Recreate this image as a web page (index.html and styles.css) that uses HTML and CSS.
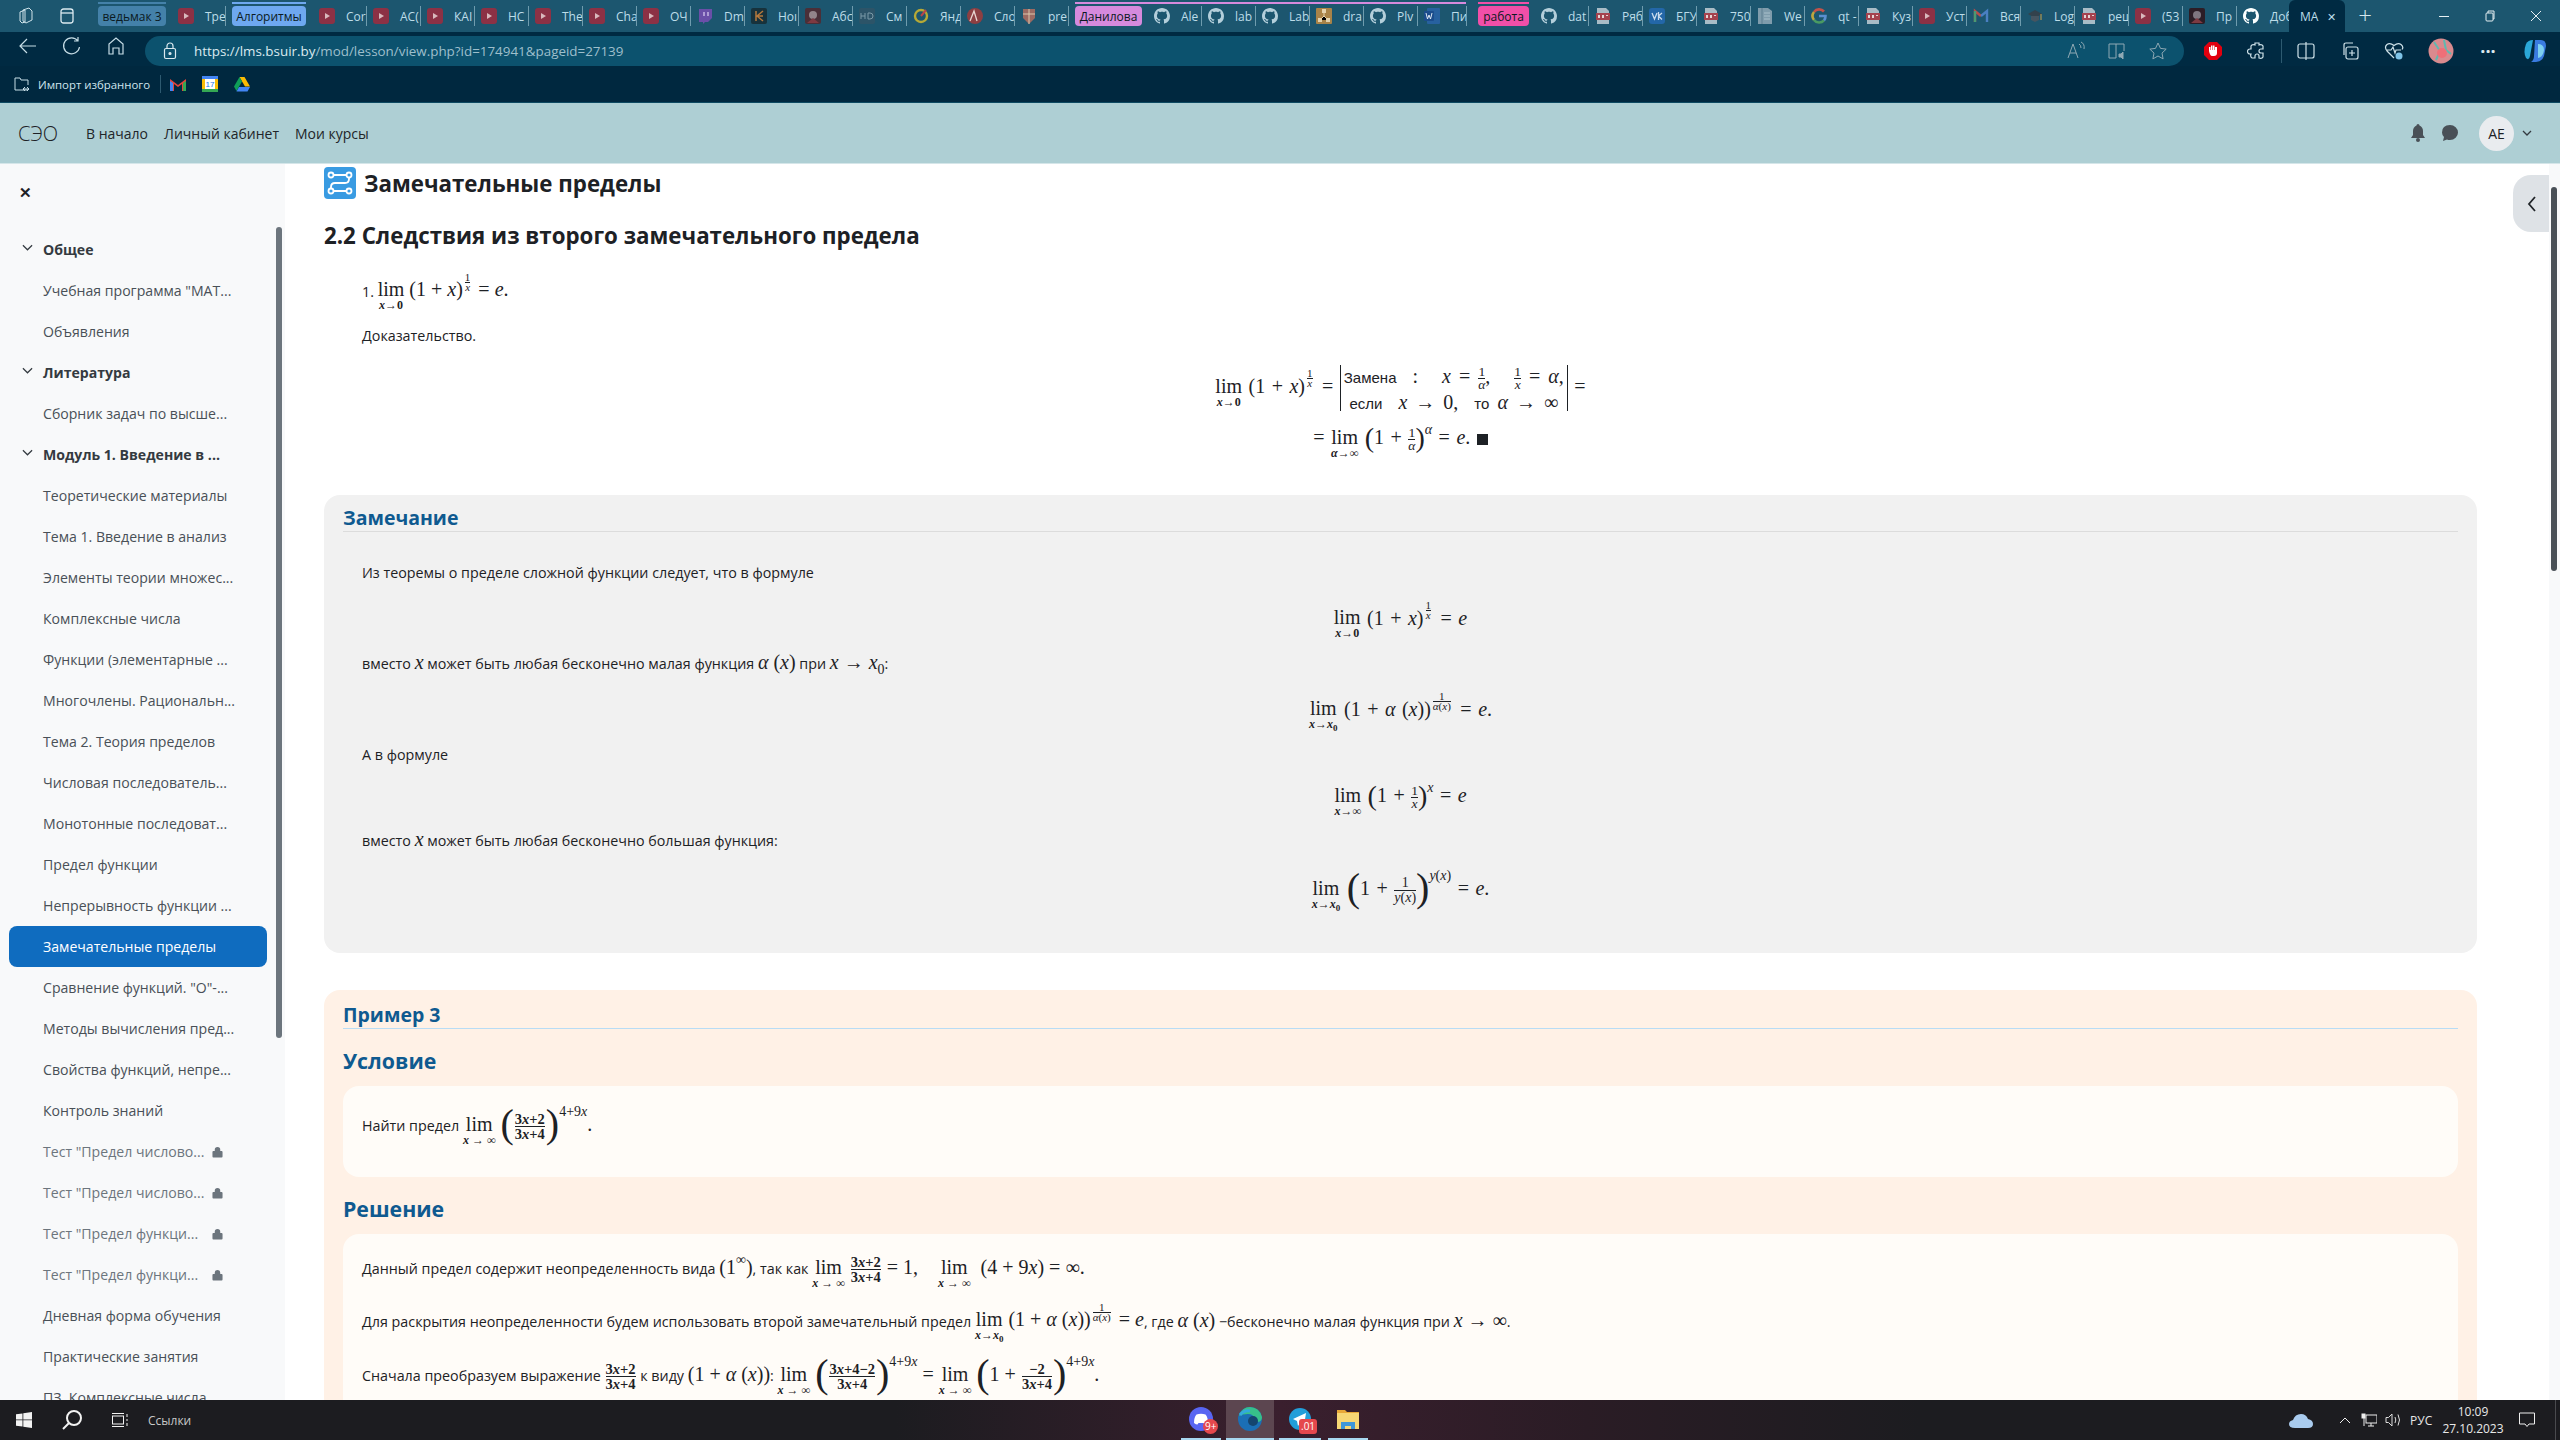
FILE: index.html
```html
<!DOCTYPE html>
<html lang="ru">
<head>
    <meta charset="UTF-8">
    <meta name="viewport" content="width=device-width, initial-scale=1.0">
    <title>Замечательные пределы</title>
    <link rel="stylesheet" href="styles.css">
</head>
<body>

    <!-- shared favicons -->
    <svg class="defs" width="0" height="0">
        <symbol id="yt" viewBox="0 0 16 16"><rect width="16" height="16" rx="3" fill="#8c3145"/><path d="M6 5l5 3-5 3z" fill="#d9b9bd"/></symbol>
        <symbol id="gh" viewBox="0 0 16 16"><path fill="#b4cfdb" d="M8 0C3.58 0 0 3.58 0 8c0 3.54 2.29 6.53 5.47 7.59.4.07.55-.17.55-.38 0-.19-.01-.82-.01-1.49-2.01.37-2.53-.49-2.69-.94-.09-.23-.48-.94-.82-1.13-.28-.15-.68-.52-.01-.53.63-.01 1.08.58 1.23.82.72 1.21 1.87.87 2.33.66.07-.52.28-.87.51-1.07-1.78-.2-3.64-.89-3.64-3.95 0-.87.31-1.59.82-2.15-.08-.2-.36-1.02.08-2.12 0 0 .67-.21 2.2.82.64-.18 1.32-.27 2-.27s1.36.09 2 .27c1.53-1.04 2.2-.82 2.2-.82.44 1.1.16 1.92.08 2.12.51.56.82 1.27.82 2.15 0 3.07-1.87 3.75-3.65 3.95.29.25.54.73.54 1.48 0 1.07-.01 1.93-.01 2.2 0 .21.15.46.55.38A8.013 8.013 0 0016 8c0-4.42-3.58-8-8-8z"/></symbol>
        <symbol id="pdf" viewBox="0 0 16 16"><path d="M2 0h9l3 3v13H2z" fill="#a9bcc6"/><rect x="1" y="5" width="14" height="7" fill="#a5434f"/><path d="M3 7h2v3H3zM7 7h2v3H7zM11 7h2v1h-2z" fill="#e7d5d5"/></symbol>
    </svg>

    <!-- browser chrome -->
    <div class="tabstrip">
        <div class="strip-icons">
            <svg width="18" height="18" viewBox="0 0 18 18" fill="none" stroke="#cfe3ea"><path d="M6 3l6-2 3 3v9l-6 3-3-2z"/><path d="M3 5l5-2v12l-3 1-2-2z"/></svg>
            <svg width="16" height="16" viewBox="0 0 16 16" fill="none" stroke="#dceaf0" stroke-width="1.3"><rect x="2" y="1" width="12" height="14" rx="2.5"/><path d="M2 5h12"/></svg>
        </div>
        <div class="group group-witcher"><div class="chip">ведьмак 3</div></div>
        <div class="tab"><svg class="fav"><use href="#yt"/></svg><span>Тре</span></div>
        <div class="group group-algo"><div class="chip">Алгоритмы</div></div>
        <div class="tab"><svg class="fav"><use href="#yt"/></svg><span>Cor</span></div>
        <div class="tab"><svg class="fav"><use href="#yt"/></svg><span>АС(</span></div>
        <div class="tab"><svg class="fav"><use href="#yt"/></svg><span>КАІ</span></div>
        <div class="tab"><svg class="fav"><use href="#yt"/></svg><span>НС</span></div>
        <div class="tab"><svg class="fav"><use href="#yt"/></svg><span>The</span></div>
        <div class="tab"><svg class="fav"><use href="#yt"/></svg><span>Cha</span></div>
        <div class="tab"><svg class="fav"><use href="#yt"/></svg><span>ОЧ</span></div>
        <div class="tab"><svg class="fav" viewBox="0 0 16 16"><path d="M2 1h13v9l-4 4H8l-2 2v-2H2z" fill="#6a4fa8"/><path d="M7 4v4M11 4v4" stroke="#cbbce8" stroke-width="1.4"/></svg><span>Dm</span></div>
        <div class="tab"><svg class="fav" viewBox="0 0 16 16"><rect width="16" height="16" rx="2" fill="#17323c"/><path d="M5 3v10M12 3L6 8l6 5M12 8H6" stroke="#b5793d" stroke-width="1.5" fill="none"/></svg><span>Hoı</span></div>
        <div class="tab"><svg class="fav" viewBox="0 0 16 16"><rect width="16" height="16" rx="2" fill="#4a2f38"/><circle cx="8" cy="7" r="4" fill="#93848a"/><path d="M2 15l6-5 6 5z" fill="#7d3a42"/></svg><span>Абс</span></div>
        <div class="tab"><svg class="fav" viewBox="0 0 16 16"><rect width="16" height="16" rx="2" fill="#2c5468"/><path d="M2 5v6M6 5v6M2 8h4M9 5v6h2q3 0 3-3t-3-3z" stroke="#7b9aa8" fill="none"/></svg><span>См</span></div>
        <div class="tab"><svg class="fav" viewBox="0 0 16 16"><circle cx="8" cy="8" r="6" fill="none" stroke="#b6a936" stroke-width="2.4"/><path d="M8 8l5-6" stroke="#b8444a" stroke-width="2"/></svg><span>Янд</span></div>
        <div class="tab"><svg class="fav" viewBox="0 0 16 16"><circle cx="8" cy="8" r="8" fill="#8d3f42"/><path d="M3 13L7 3l3 10" stroke="#e8d4d0" stroke-width="1.3" fill="none"/></svg><span>Сло</span></div>
        <div class="tab"><svg class="fav" viewBox="0 0 16 16"><path d="M2 1h12v9l-6 6-6-6z" fill="#9b6a62"/><path d="M8 1v15M2 6h12" stroke="#d9c8ae"/></svg><span>pre</span></div>
        <div class="group group-danilova">
            <div class="chip">Данилова</div>
            <div class="tab"><svg class="fav"><use href="#gh"/></svg><span>Ale</span></div>
            <div class="tab"><svg class="fav"><use href="#gh"/></svg><span>lab</span></div>
            <div class="tab"><svg class="fav"><use href="#gh"/></svg><span>Lab</span></div>
            <div class="tab"><svg class="fav" viewBox="0 0 16 16"><rect width="16" height="16" rx="1" fill="#a98348"/><path d="M8 4v4M4 12l4-4 4 4" stroke="#e4d2ae"/><rect x="6" y="1" width="4" height="4" fill="#e4d2ae"/><rect x="2" y="10" width="4" height="4" fill="#e4d2ae"/><rect x="10" y="10" width="4" height="4" fill="#e4d2ae"/></svg><span>dra</span></div>
            <div class="tab"><svg class="fav"><use href="#gh"/></svg><span>Plv</span></div>
            <div class="tab"><svg class="fav" viewBox="0 0 16 16"><rect x="3" y="0" width="13" height="16" rx="1" fill="#27619f"/><rect y="3" width="10" height="10" rx="1" fill="#1b4d8c"/><path d="M2 5l1.5 6L5 7l1.5 4L8 5" stroke="#dde7f2" fill="none"/></svg><span>Пи</span></div>
        </div>
        <div class="sep"></div>
        <div class="group group-work"><div class="chip">работа</div></div>
        <div class="tab"><svg class="fav"><use href="#gh"/></svg><span>dat</span></div>
        <div class="tab"><svg class="fav"><use href="#pdf"/></svg><span>Ряб</span></div>
        <div class="tab"><svg class="fav" viewBox="0 0 16 16"><rect width="16" height="16" rx="3" fill="#2367a8"/><path d="M3 5l2.5 6L8 5M9.5 4v8M13 5l-3.5 3 3.5 3.5" stroke="#c9dcee" stroke-width="1.3" fill="none"/></svg><span>БГУ</span></div>
        <div class="tab"><svg class="fav"><use href="#pdf"/></svg><span>750</span></div>
        <div class="tab"><svg class="fav" viewBox="0 0 16 16"><path d="M1 0h10l4 3v13H1z" fill="#7f9cac"/><path d="M5 0v16" stroke="#5f7f90"/><path d="M7 5h6M7 8h6M7 11h6" stroke="#a9c0cb"/></svg><span>We</span></div>
        <div class="tab"><svg class="fav" viewBox="0 0 16 16" fill="none" stroke-width="2.6"><path d="M13 3.5A6.5 6.5 0 003 4" stroke="#c2534a"/><path d="M3 4a6.5 6.5 0 000 8" stroke="#bda63f"/><path d="M3 12a6.5 6.5 0 0010 .4" stroke="#4a9a62"/><path d="M13 12.4A6.5 6.5 0 0014.5 8H8" stroke="#5a8fd0"/></svg><span>qt -</span></div>
        <div class="tab"><svg class="fav"><use href="#pdf"/></svg><span>Куз</span></div>
        <div class="tab"><svg class="fav"><use href="#yt"/></svg><span>Уст</span></div>
        <div class="tab"><svg class="fav" viewBox="0 0 16 16" fill="none" stroke-width="2.4"><path d="M2 14V3l6 5" stroke="#b84c4a"/><path d="M14 14V3L8 8" stroke="#4a7fc2"/><path d="M2 14V3" stroke="#4a9a72"/></svg><span>Вся</span></div>
        <div class="tab"><svg class="fav" viewBox="0 0 16 16"><path d="M8 2L1 6l7 4 7-4z" fill="#33424c"/><path d="M4 8v4l4 2 4-2V8" fill="#465560"/><path d="M14 6v6" stroke="#c8a24a"/></svg><span>Log</span></div>
        <div class="tab"><svg class="fav"><use href="#pdf"/></svg><span>реш</span></div>
        <div class="tab"><svg class="fav"><use href="#yt"/></svg><span>(53</span></div>
        <div class="tab"><svg class="fav" viewBox="0 0 16 16"><rect width="16" height="16" rx="2" fill="#2c1d26"/><circle cx="8" cy="7" r="4" fill="#7f7680"/><path d="M2 15l6-5 6 5z" fill="#7d3a42"/></svg><span>Пр</span></div>
        <div class="tab tab-last"><svg class="fav fav-white"><use href="#gh"/></svg><span>Доб</span></div>
        <div class="tab-active"><span>МА</span><b>✕</b></div>
        <div class="tab-new">+</div>
        <div class="win-controls">
            <svg width="14" height="14" viewBox="0 0 14 14" stroke="#e5eff3"><path d="M2 7.5h10"/></svg>
            <svg width="14" height="14" viewBox="0 0 14 14" stroke="#e5eff3" fill="none"><rect x="3" y="4" width="7" height="8" rx="1"/><path d="M5 4V2h6v8h-1"/></svg>
            <svg width="14" height="14" viewBox="0 0 14 14" stroke="#e5eff3"><path d="M2 2l10 10M12 2L2 12"/></svg>
        </div>
    </div>

    <div class="addressbar">
        <div class="nav-icons">
            <svg width="20" height="20" viewBox="0 0 20 20" fill="none" stroke="#c6dde6" stroke-width="1.2"><path d="M18 10H2M9 3l-7 7 7 7"/></svg>
            <svg width="20" height="20" viewBox="0 0 20 20" fill="none" stroke="#c6dde6" stroke-width="1.2"><path d="M16 5a8 8 0 101.5 6M16 1v4h-4"/></svg>
            <svg width="20" height="20" viewBox="0 0 20 20" fill="none" stroke="#c6dde6" stroke-width="1.2"><path d="M3 18V8l7-6 7 6v10h-4v-6H7v6z"/></svg>
        </div>
        <div class="urlbar">
            <svg class="lock" width="16" height="18" viewBox="0 0 16 18" fill="none" stroke="#dbe9ef" stroke-width="1.2"><rect x="2.5" y="6.5" width="11" height="10" rx="1.5"/><path d="M5 6V4a3 3 0 016 0v2"/><circle cx="8" cy="11.5" r="1" fill="#dbe9ef"/></svg>
            <span class="url"><span class="url-strong">https://lms.bsuir.by</span>/mod/lesson/view.php?id=174941&amp;pageid=27139</span>
            <div class="url-icons">
                <svg width="20" height="20" viewBox="0 0 20 20" fill="none" stroke="#8fa9b4"><path d="M2 17L7 3l5 14M4 12h6M13 3q2 1 2 4M15 1q4 2 3 7"/></svg>
                <svg width="20" height="20" viewBox="0 0 20 20" fill="none" stroke="#8fa9b4"><path d="M2 3h7v14H2zM9 3h8v7"/><path d="M12 13h2l2-2v7l-2-2h-2z" fill="#8fa9b4"/></svg>
                <svg width="20" height="20" viewBox="0 0 20 20" fill="none" stroke="#8fa9b4"><path d="M10 2l2.5 5.4 5.7.7-4.2 4 1.1 5.8L10 15l-5.1 2.9L6 12.1l-4.2-4 5.7-.7z"/></svg>
            </div>
        </div>
        <div class="tool-icons">
            <svg width="20" height="20" viewBox="0 0 20 20"><path d="M6 1h8l5 5v8l-5 5H6l-5-5V6z" fill="#e2000f"/><path d="M6 10V6h1.5v3h.5V4.5h1.5V9h.5V4.5h1.5V9h.5V6H14v6q0 3-3 3H9q-2 0-3-5z" fill="#fff"/></svg>
            <svg width="20" height="20" viewBox="0 0 20 20" fill="none" stroke="#cfe3ea" stroke-width="1.2"><path d="M8 2h4v2q3-1 4 1v3h-2a2 2 0 000 4h2v4q-1 2-4 1v-2a2 2 0 00-4 0v2H5q-2-1-1-4H3a2 2 0 010-5h1V5q1-2 4-1z"/></svg>
            <div class="tool-sep"></div>
            <svg width="20" height="20" viewBox="0 0 20 20" fill="none" stroke="#cfe3ea" stroke-width="1.2"><rect x="2" y="3" width="16" height="14" rx="2"/><path d="M10 1v18"/></svg>
            <svg width="20" height="20" viewBox="0 0 20 20" fill="none" stroke="#cfe3ea" stroke-width="1.2"><rect x="6" y="6" width="12" height="12" rx="2"/><path d="M4 14V4q0-2 2-2h7M12 9v6M9 12h6"/></svg>
            <svg width="20" height="20" viewBox="0 0 20 20" fill="none" stroke="#cfe3ea" stroke-width="1.2"><path d="M10 17L3 10q-3-4 0-6.500 3-2 7 1 4-3 7-1 3 2.500 1 5M2 9h5l2-3 2 6 1-3h5"/><circle cx="15" cy="15" r="3.500" fill="#7fc4e8" stroke="none"/></svg>
            <svg width="26" height="26" viewBox="0 0 26 26"><circle cx="13" cy="13" r="12.500" fill="#d98a8e"/><path d="M6 4l6 9-4 9M16 2l2 10 5 4" stroke="#5fb8b0" stroke-width="2" fill="none"/><circle cx="14" cy="15" r="5" fill="#ef6f78"/></svg>
            <span class="dots">···</span>
            <svg width="26" height="26" viewBox="0 0 26 26"><path d="M4 6q2-4 7-4l-3 16q-1 5-4 2-3-6 0-14z" fill="#2aa7d8"/><path d="M13 2h6q5 0 5 6l-2 10q-2 6-8 6H9q3-2 3-6z" fill="#3a7be0"/><path d="M16 6q6 0 6 6-1 7-6 8z" fill="#7dd0f0"/></svg>
        </div>
    </div>

    <div class="favbar">
        <svg width="18" height="18" viewBox="0 0 18 18" fill="none" stroke="#c6dde6"><path d="M2 3h5l1 2h7v5M15 15H2V3M10 14h6M12 12l-2 2 2 2M14 12l2 2-2 2"/></svg>
        <span class="fav-label">Импорт избранного</span>
        <div class="fav-sep"></div>
        <svg width="16" height="13" viewBox="0 0 16 13"><path d="M0 1l8 6 8-6v12h-4V6L8 9 4 6v7H0z" fill="#e5443a"/><path d="M0 3v10h3V5z" fill="#4285f4"/><path d="M16 3v10h-3V5z" fill="#34a853"/></svg>
        <svg width="16" height="16" viewBox="0 0 16 16"><rect width="16" height="16" rx="2" fill="#fbbc04"/><rect x="0" y="0" width="16" height="3" fill="#4285f4"/><rect x="0" y="13" width="16" height="3" fill="#34a853"/><rect x="3" y="3" width="10" height="10" fill="#fff"/><text x="8" y="11" class="cal-num">17</text></svg>
        <svg width="16" height="15" viewBox="0 0 16 15"><path d="M5.500 0h5L16 9.500h-5z" fill="#fbbc04"/><path d="M5.500 0L0 9.500 2.500 14 8 4.500z" fill="#0f9d58"/><path d="M2.500 14.500L5 10h11l-2.500 4.500z" fill="#4285f4"/></svg>
    </div>

    <!-- site header -->
    <header class="navbar">
        <span class="brand">СЭО</span>
        <nav class="nav-links">
            <a>В начало</a>
            <a>Личный кабинет</a>
            <a>Мои курсы</a>
        </nav>
        <div class="user-menu">
            <svg width="16" height="18" viewBox="0 0 16 18"><path d="M8 0q1.500 0 1.500 1.500Q13 3 13 7v4l2 3H1l2-3V7q0-4 3.500-5.500Q6.500 0 8 0z" fill="#495057"/><circle cx="8" cy="16" r="2" fill="#495057"/></svg>
            <svg class="chat" width="18" height="18" viewBox="0 0 18 18"><path d="M9 1a8 7.500 0 110 15q-2 0-3-.5L2 17l1-4Q1 11 1 8.500 1 1 9 1z" fill="#495057"/></svg>
            <div class="avatar">АЕ</div>
            <svg width="10" height="6" viewBox="0 0 10 6" fill="none" stroke="#343a40" stroke-width="1.3"><path d="M1 1l4 4 4-4"/></svg>
        </div>
    </header>

    <div class="page">
        <aside class="sidebar">
            <div class="close-row"><span class="close">✕</span></div>
            <ul class="course-index">
                <li class="section"><svg class="chev" viewBox="0 0 12 7"><path d="M1 1l5 5 5-5"/></svg>Общее</li>
                <li>Учебная программа "МАТ...</li>
                <li>Объявления</li>
                <li class="section"><svg class="chev" viewBox="0 0 12 7"><path d="M1 1l5 5 5-5"/></svg>Литература</li>
                <li>Сборник задач по высше...</li>
                <li class="section"><svg class="chev" viewBox="0 0 12 7"><path d="M1 1l5 5 5-5"/></svg>Модуль 1. Введение в ...</li>
                <li>Теоретические материалы</li>
                <li>Тема 1. Введение в анализ</li>
                <li>Элементы теории множес...</li>
                <li>Комплексные числа</li>
                <li>Функции (элементарные ...</li>
                <li>Многочлены. Рациональн...</li>
                <li>Тема 2. Теория пределов</li>
                <li>Числовая последователь...</li>
                <li>Монотонные последоват...</li>
                <li>Предел функции</li>
                <li>Непрерывность функции ...</li>
                <li class="active">Замечательные пределы</li>
                <li>Сравнение функций. "О"-...</li>
                <li>Методы вычисления пред...</li>
                <li>Свойства функций, непре...</li>
                <li>Контроль знаний</li>
                <li class="locked"><span>Тест "Предел числово...</span><svg class="lock-ico" viewBox="0 0 12 12"><path d="M3 5V3.500a3 3 0 016 0V5h1.500q1 0 1 1v5q0 1-1 1h-9q-1 0-1-1V6q0-1 1-1z"/></svg></li>
                <li class="locked"><span>Тест "Предел числово...</span><svg class="lock-ico" viewBox="0 0 12 12"><path d="M3 5V3.500a3 3 0 016 0V5h1.500q1 0 1 1v5q0 1-1 1h-9q-1 0-1-1V6q0-1 1-1z"/></svg></li>
                <li class="locked"><span>Тест "Предел функци...</span><svg class="lock-ico" viewBox="0 0 12 12"><path d="M3 5V3.500a3 3 0 016 0V5h1.500q1 0 1 1v5q0 1-1 1h-9q-1 0-1-1V6q0-1 1-1z"/></svg></li>
                <li class="locked"><span>Тест "Предел функци...</span><svg class="lock-ico" viewBox="0 0 12 12"><path d="M3 5V3.500a3 3 0 016 0V5h1.500q1 0 1 1v5q0 1-1 1h-9q-1 0-1-1V6q0-1 1-1z"/></svg></li>
                <li>Дневная форма обучения</li>
                <li>Практические занятия</li>
                <li>ПЗ. Комплексные числа</li>
            </ul>
            <div class="side-scroll"></div>
        </aside>

        <main class="content">
            <div class="page-title">
                <svg class="lesson-icon" viewBox="0 0 32 32"><rect width="32" height="32" rx="4" fill="#399be2"/><g fill="none" stroke="#fff" stroke-width="1.800"><circle cx="7" cy="8" r="2.500"/><circle cx="25" cy="8" r="2.500"/><circle cx="7" cy="24" r="2.500"/><circle cx="25" cy="24" r="2.500"/><path d="M9.500 8h13M25 10.500V12q0 4-4 4H11q-4 0-4 4v1.500M9.500 24h13"/></g></svg>
                <h2>Замечательные пределы</h2>
            </div>
            <h3 class="lesson-title">2.2 Следствия из второго замечательного предела</h3>

            <div class="intro">
                <p>1. <span class="m"><span class="lim">lim<small><i>x</i>→0</small></span> (1 + <i>x</i>)<sup class="ex"><span class="frac tiny"><span>1</span><span><i>x</i></span></span></sup> = <i>e</i>.</span></p>
                <p>Доказательство.</p>
                <div class="display m big-row">
                    <span class="lim">lim<small><i>x</i>→0</small></span> (1 + <i>x</i>)<sup class="ex"><span class="frac tiny"><span>1</span><span><i>x</i></span></span></sup> =
                    <span class="cases">
                        <span class="cases-row"><span class="sans">Замена</span>&nbsp; : &nbsp; <i>x</i> = <span class="frac"><span>1</span><span><i>α</i></span></span>, &nbsp; <span class="frac"><span>1</span><span><i>x</i></span></span> = <i>α</i>,</span>
                        <span class="cases-row"><span class="sans">если</span>&nbsp; <i>x</i> → 0, &nbsp;<span class="sans">то</span> <i>α</i> → ∞</span>
                    </span> =
                </div>
                <div class="display m">= <span class="lim">lim<small><i>α</i>→∞</small></span> <span class="paren mid">(</span>1 + <span class="frac"><span>1</span><span><i>α</i></span></span><span class="paren mid">)</span><sup><i>α</i></sup> = <i>e</i>. <span class="qed"></span></div>
            </div>

            <section class="remark">
                <h4>Замечание</h4>
                <div class="remark-body">
                    <p>Из теоремы о пределе сложной функции следует, что в формуле</p>
                    <div class="display m"><span class="lim">lim<small><i>x</i>→0</small></span> (1 + <i>x</i>)<sup class="ex"><span class="frac tiny"><span>1</span><span><i>x</i></span></span></sup> = <i>e</i></div>
                    <p>вместо <i class="m">x</i> может быть любая бесконечно малая функция <span class="m"><i>α</i> (<i>x</i>)</span> при <span class="m"><i>x</i> → <i>x</i><sub>0</sub></span>:</p>
                    <div class="display m"><span class="lim">lim<small><i>x</i>→<i>x</i><sub>0</sub></small></span> (1 + <i>α</i> (<i>x</i>))<sup class="ex"><span class="frac tiny"><span>1</span><span><i>α</i>(<i>x</i>)</span></span></sup> = <i>e</i>.</div>
                    <p>А в формуле</p>
                    <div class="display m low"><span class="lim">lim<small><i>x</i>→∞</small></span> <span class="paren mid">(</span>1 + <span class="frac"><span>1</span><span><i>x</i></span></span><span class="paren mid">)</span><sup><i>x</i></sup> = <i>e</i></div>
                    <p>вместо <i class="m">x</i> может быть любая бесконечно большая функция:</p>
                    <div class="display m low"><span class="lim">lim<small><i>x</i>→<i>x</i><sub>0</sub></small></span> <span class="paren">(</span>1 + <span class="frac tall"><span>1</span><span><i>y</i>(<i>x</i>)</span></span><span class="paren">)</span><sup class="ex-high"><i>y</i>(<i>x</i>)</sup> = <i>e</i>.</div>
                </div>
            </section>

            <section class="example">
                <h4>Пример 3</h4>
                <h5>Условие</h5>
                <div class="inner inner-task">
                    <p>Найти предел <span class="m"><span class="lim">lim<small><i>x</i> → ∞</small></span> <span class="paren">(</span><span class="frac small"><span>3<i>x</i>+2</span><span>3<i>x</i>+4</span></span><span class="paren">)</span><sup class="ex-high">4+9<i>x</i></sup>.</span></p>
                </div>
                <h5>Решение</h5>
                <div class="inner inner-solution">
                    <p>Данный предел содержит неопределенность вида <span class="m">(1<sup>∞</sup>)</span>, так как <span class="m"><span class="lim">lim<small><i>x</i> → ∞</small></span> <span class="frac small"><span>3<i>x</i>+2</span><span>3<i>x</i>+4</span></span> = 1, &nbsp; &nbsp;<span class="lim">lim<small><i>x</i> → ∞</small></span> &nbsp;(4 + 9<i>x</i>) = ∞.</span></p>
                    <p>Для раскрытия неопределенности будем использовать второй замечательный предел <span class="m"><span class="lim">lim<small><i>x</i>→<i>x</i><sub>0</sub></small></span> (1 + <i>α</i> (<i>x</i>))<sup class="ex"><span class="frac tiny"><span>1</span><span><i>α</i>(<i>x</i>)</span></span></sup> = <i>e</i></span>, где <span class="m"><i>α</i> (<i>x</i>)</span> −бесконечно малая функция при <span class="m"><i>x</i> → ∞</span>.</p>
                    <p>Сначала преобразуем выражение <span class="m"><span class="frac small"><span>3<i>x</i>+2</span><span>3<i>x</i>+4</span></span></span> к виду <span class="m">(1 + <i>α</i> (<i>x</i>))</span>: <span class="m"><span class="lim">lim<small><i>x</i> → ∞</small></span> <span class="paren">(</span><span class="frac small"><span>3<i>x</i>+4−2</span><span>3<i>x</i>+4</span></span><span class="paren">)</span><sup class="ex-high">4+9<i>x</i></sup> = <span class="lim">lim<small><i>x</i> → ∞</small></span> <span class="paren">(</span>1 + <span class="frac small"><span>−2</span><span>3<i>x</i>+4</span></span><span class="paren">)</span><sup class="ex-high">4+9<i>x</i></sup>.</span></p>
                </div>
            </section>

            <div class="drawer-toggle">
                <svg width="10" height="18" viewBox="0 0 10 18" fill="none" stroke="#212529" stroke-width="1.800"><path d="M8 2L2 9l6 7"/></svg>
            </div>
        </main>

        <div class="page-scroll"><div class="page-thumb"></div></div>
    </div>

    <!-- windows taskbar -->
    <footer class="taskbar">
        <div class="tb-left">
            <svg width="16" height="16" viewBox="0 0 16 16" fill="#f2f2f2"><path d="M0 2.300l6.500-.9V7.500H0zM7.300 1.300L16 0v7.500H7.300zM0 8.300h6.500v6.300L0 13.700zM7.300 8.300H16V16l-8.700-1.200z"/></svg>
            <svg width="22" height="22" viewBox="0 0 22 22" fill="none" stroke="#f2f2f2" stroke-width="2"><circle cx="13" cy="9" r="7"/><path d="M8 14l-6 6"/></svg>
            <svg width="16" height="16" viewBox="0 0 16 16" fill="none" stroke="#f2f2f2"><rect x="0.500" y="4" width="11" height="8"/><path d="M0 1.500h12M0 14.500h12M15 2v3M15 7v2M15 11v3"/></svg>
            <span class="tb-links">Ссылки</span>
        </div>
        <div class="tb-apps">
            <div class="app app-narrow">
                <svg width="24" height="24" viewBox="0 0 24 24"><circle cx="12" cy="12" r="12" fill="#5865f2"/><path d="M5 16q0-6 2.500-8.500 4.500-1.500 9 0Q19 10 19 16q-2 1.500-3.500 1.500l-1-1.500h-5l-1 1.500Q7 17.500 5 16z" fill="#fff"/></svg>
                <span class="badge badge-round">9+</span>
            </div>
            <div class="app app-current">
                <svg width="24" height="24" viewBox="0 0 24 24"><circle cx="12" cy="12" r="12" fill="#1b6fb5"/><path d="M1 9Q4 0 12 0q9 0 12 10 0 5-5 5-4 0-3-3 0-5-6-5-6 0-9 2z" fill="#37c08a"/><path d="M2 8q4-5 10-4" stroke="#33a9dc" stroke-width="3" fill="none"/><circle cx="15" cy="14" r="5" fill="#14456f"/></svg>
            </div>
            <div class="app">
                <svg width="22" height="22" viewBox="0 0 22 22"><circle cx="11" cy="11" r="11" fill="#229ed9"/><path d="M4 11l13-6-2 13-4-3-2 3-1-5z" fill="#fff"/></svg>
                <span class="badge badge-tg">.01</span>
            </div>
            <div class="app app-narrow app-folder">
                <svg width="22" height="20" viewBox="0 0 22 20"><path d="M0 1h8l2 2h12v17H0z" fill="#e8a838"/><rect y="4" width="22" height="16" fill="#f7d774"/><path d="M4 20v-7h14v7h-4v-3H8v3z" fill="#3f97d8"/></svg>
            </div>
        </div>
        <div class="tray">
            <svg width="24" height="15" viewBox="0 0 24 15"><path d="M6 15q-6 0-6-4 0-3 4-4 2-6 8-6 5 0 7 5 5 1 5 5 0 4-5 4z" fill="#a9cbee"/></svg>
            <svg class="tray-caret" width="12" height="7" viewBox="0 0 12 7" fill="none" stroke="#eee"><path d="M1 6l5-5 5 5"/></svg>
            <svg class="tray-net" width="16" height="16" viewBox="0 0 16 16" fill="none" stroke="#eee"><rect x="5" y="3" width="11" height="8"/><rect x="1" y="2" width="3" height="4" fill="#eee"/><path d="M3 6v8M10 11v3M7 14h6"/></svg>
            <svg class="tray-vol" width="16" height="16" viewBox="0 0 16 16" fill="none" stroke="#ddd"><path d="M1 5.500h2.500L7 2v12l-3.500-3.500H1zM10 5q1.500 3 0 6M13 2.500q3 5.500 0 11"/></svg>
            <span class="lang">РУС</span>
            <div class="clock"><span>10:09</span><span>27.10.2023</span></div>
            <svg class="notify" width="16" height="16" viewBox="0 0 16 16" fill="none" stroke="#eee"><path d="M.5 1h15v11H10l-2 2.500L6 12H.5z"/></svg>
            <div class="show-desktop"></div>
        </div>
    </footer>

</body>
</html>
```
FILE: styles.css
```css
* {
    box-sizing: border-box;
}

body {
    margin: 0;
    height: 1440px;
    width: 2560px;
    overflow: hidden;
    display: flex;
    flex-direction: column;
    font-family: "Open Sans", Arial, sans-serif;
    font-size: 14.3px;
    color: #1d2125;
    background: #fff;
}

p, h2, h3, h4, h5, ul {
    margin: 0;
    padding: 0;
}

.defs {
    position: absolute;
}

/* ---- tab strip ---- */
.tabstrip {
    height: 32px;
    flex: none;
    display: flex;
    align-items: flex-start;
    background: #1c566f;
    font-size: 12px;
    color: #bcdde9;
}

.strip-icons {
    width: 92px;
    height: 32px;
    display: flex;
    align-items: center;
    gap: 24px;
    padding-left: 17px;
}

.tab {
    width: 54px;
    height: 20px;
    margin-top: 6px;
    flex: none;
    display: flex;
    align-items: center;
    gap: 11px;
    padding-left: 6px;
    overflow: hidden;
    white-space: nowrap;
    border-right: 1px solid #6f9cae;
}

.fav {
    width: 16px;
    height: 16px;
    flex: none;
}

.fav-white {
    filter: brightness(1.4);
}

.group {
    height: 32px;
    flex: none;
    display: flex;
    align-items: flex-start;
    margin: 0 6px;
    padding-top: 2px;
    position: relative;
}

.group::before {
    content: "";
    position: absolute;
    left: 0;
    right: 0;
    top: 2px;
    height: 2px;
    background: var(--group-color);
}

.chip {
    height: 20px;
    margin-top: 4px;
    display: flex;
    align-items: center;
    justify-content: center;
    white-space: nowrap;
    border-radius: 4px;
    color: #0b1a22;
    background: var(--group-color);
}

.group-witcher { --group-color: #4481a9; }
.group-witcher .chip { width: 68px; }
.group-algo { --group-color: #6ea8f0; margin-left: 6px; margin-right: 7px; }
.group-algo .chip { width: 74px; }
.group-danilova { --group-color: #d68add; }
.group-danilova .chip { width: 67px; margin-right: 6px; }
.group-danilova .tab:last-child { width: 48px; border-right: 0; }
.group-danilova .tab { margin-top: 4px; }
.group-work { --group-color: #f14fa8; }
.group-work .chip { width: 51px; }

.sep {
    width: 1px;
    height: 20px;
    margin: 6px -1px 0 0;
    flex: none;
    background: #6f9cae;
    position: relative;
    left: -6px;
}

.tab-last {
    width: 52px;
    border-right: 0;
}

.tab-active {
    width: 56px;
    height: 32px;
    flex: none;
    display: flex;
    align-items: center;
    gap: 9px;
    padding-left: 11px;
    background: #002a42;
    border-radius: 6px 6px 0 0;
}

.tab-active b {
    font-weight: 400;
    font-size: 11px;
}

.tab-new {
    width: 40px;
    height: 32px;
    flex: none;
    text-align: center;
    font-size: 24px;
    line-height: 30px;
    font-weight: 300;
    color: #d5e8ef;
}

.win-controls {
    margin-left: auto;
    height: 32px;
    display: flex;
    align-items: center;
    gap: 32px;
    padding-right: 17px;
}

/* ---- address bar ---- */
.addressbar {
    height: 34px;
    flex: none;
    display: flex;
    align-items: flex-start;
    background: #002a42;
}

.nav-icons {
    width: 145px;
    height: 34px;
    padding: 4px 0 0 18px;
    display: flex;
    gap: 24px;
    flex: none;
}

.urlbar {
    width: 2039px;
    height: 30px;
    margin-top: 4px;
    flex: none;
    display: flex;
    align-items: center;
    gap: 16px;
    padding: 0 14px 0 17px;
    background: #0c526e;
    border-radius: 15px;
    color: #9ebfcc;
    font-size: 13.4px;
}

.url-strong {
    color: #dbeaf0;
}

.url-icons {
    margin-left: auto;
    display: flex;
    gap: 21px;
    padding-right: 2px;
}

.tool-icons {
    flex: 1;
    height: 34px;
    padding: 4px 0 0 19px;
    display: flex;
    align-items: center;
    gap: 24px;
}

.tool-sep {
    width: 1px;
    height: 24px;
    margin: 0 -10px;
    background: #2d5a70;
}

.dots {
    color: #dbe9ef;
    font-size: 18px;
    font-weight: 700;
    width: 20px;
    text-align: center;
}

/* ---- favourites bar ---- */
.favbar {
    height: 37px;
    flex: none;
    display: flex;
    align-items: center;
    padding-left: 13px;
    background: #00283f;
    border-bottom: 1px solid #0e4a62;
}

.fav-label {
    margin-left: 7px;
    font-size: 11.4px;
    color: #cfe5ee;
}

.fav-sep {
    width: 1px;
    height: 18px;
    margin: 0 9px 0 10px;
    background: #2d5a70;
}

.favbar svg + svg {
    margin-left: 16px;
}

.fav-sep + svg {
    margin-left: 0;
}

.cal-num {
    font-family: "Liberation Sans", sans-serif;
    font-size: 8px;
    text-anchor: middle;
    fill: #1a73e8;
}

/* ---- site navbar ---- */
.navbar {
    height: 61px;
    flex: none;
    display: flex;
    align-items: center;
    padding: 0 28px 0 18px;
    background: #aecfd4;
    border-bottom: 1px solid #d5e6e9;
}

.brand {
    font-size: 20px;
    font-weight: 300;
    width: 68px;
}

.nav-links {
    display: flex;
    gap: 16px;
    font-size: 14px;
    color: #212529;
}

.user-menu {
    margin-left: auto;
    display: flex;
    align-items: center;
    gap: 15px;
}

.chat {
    margin-right: 5px;
}

.avatar {
    width: 35px;
    height: 35px;
    border-radius: 50%;
    background: #e9ecef;
    display: flex;
    align-items: center;
    justify-content: center;
    font-size: 14px;
    margin-right: -7px;
}

/* ---- page layout ---- */
.page {
    flex: 1;
    min-height: 0;
    display: flex;
}

.sidebar {
    width: 285px;
    flex: none;
    background: #f8f9fa;
    position: relative;
    overflow: hidden;
}

.close-row {
    height: 65px;
    padding: 18px 0 0 19px;
}

.close {
    font-size: 15px;
    font-weight: 700;
    color: #1d2125;
}

.course-index {
    list-style: none;
}

.course-index li {
    height: 41px;
    margin: 0 18px 0 9px;
    padding-left: 34px;
    display: flex;
    align-items: center;
    font-size: 14.1px;
    white-space: nowrap;
    color: #495057;
    position: relative;
}

.course-index .section {
    font-weight: 700;
    color: #343a40;
}

.course-index .active {
    background: #0f6cbf;
    color: #fff;
    border-radius: 8px;
}

.course-index .locked {
    color: #6c757d;
}

.locked span {
    width: 169px;
}

.lock-ico {
    width: 11px;
    height: 12px;
    fill: #6c757d;
}

.chev {
    position: absolute;
    left: 13px;
    top: 15px;
    width: 11px;
    height: 7px;
    fill: none;
    stroke: #343a40;
    stroke-width: 1.3;
}

.side-scroll {
    position: absolute;
    left: 276px;
    top: 63px;
    width: 6px;
    height: 811px;
    border-radius: 3px;
    background: #6c757d;
}

.content {
    flex: 1;
    min-width: 0;
    padding: 3px 72px 0 39px;
    position: relative;
    overflow: hidden;
}

.page-title {
    display: flex;
    align-items: center;
    gap: 8px;
    height: 32px;
}

.lesson-icon {
    width: 32px;
    height: 32px;
}

.page-title h2 {
    font-size: 22.3px;
    font-weight: 700;
}

.lesson-title {
    margin-top: 22px;
    font-size: 22.3px;
    line-height: 30px;
    font-weight: 700;
}

.intro {
    height: 244px;
    padding: 10px 0 0 38px;
    display: grid;
    grid-template-rows: 52px 44px 59px 46px;
    align-items: center;
}

.drawer-toggle {
    position: absolute;
    right: 0;
    top: 11px;
    width: 36px;
    height: 57px;
    background: #dee2e6;
    border-radius: 18px 0 0 18px;
    display: flex;
    align-items: center;
    padding-left: 14px;
}

.page-scroll {
    width: 11px;
    flex: none;
    background: #f8f9fa;
    padding: 23px 3px 0 2px;
}

.page-thumb {
    height: 384px;
    background: #495057;
    border-radius: 3px;
}

/* ---- boxes ---- */
.remark {
    height: 458px;
    background: #f1f1f1;
    border-radius: 16px;
    padding: 9px 19px 0;
}

h4 {
    font-size: 19.5px;
    line-height: 27px;
    font-weight: 700;
    color: #0f5a90;
}

.remark h4 {
    border-bottom: 1px solid #dcdcdc;
}

.remark-body {
    padding: 22px 0 0 19px;
    display: grid;
    grid-template-rows: 36px 50px 44px 44px 52px 26px 66px 28px;
    align-items: center;
}

.example {
    margin-top: 37px;
    height: 460px;
    background: #fff1e6;
    border-radius: 16px;
    padding: 11px 19px 0;
}

.example h4 {
    border-bottom: 1px solid #b8dcf5;
}

h5 {
    font-size: 21.3px;
    line-height: 30px;
    font-weight: 700;
    color: #0f5a90;
    margin-top: 17px;
}

.inner {
    background: #fffcf8;
    border-radius: 16px;
    padding-left: 19px;
    margin-top: 10px;
}

.inner-task {
    height: 91px;
    padding-top: 26px;
}

.inner-solution {
    height: 200px;
    padding-top: 14px;
    display: grid;
    grid-template-rows: 42px 54px 64px;
    align-items: center;
}

/* ---- math ---- */
.m {
    font-family: "Liberation Serif", serif;
    font-size: 20px;
}

.sans {
    font-family: "Liberation Sans", sans-serif;
    font-size: 15px;
}

.display {
    text-align: center;
    margin-left: -38px;
    white-space: nowrap;
    word-spacing: 1.5px;
}

.display.low {
    padding-top: 8px;
}

.remark-body .display {
    margin-left: -19px;
}

.lim {
    display: inline-flex;
    flex-direction: column;
    align-items: center;
    line-height: 20px;
    height: 20px;
    vertical-align: baseline;
}

.lim small {
    font-size: 12px;
    line-height: 12px;
    font-weight: 700;
    white-space: nowrap;
}

.lim sub {
    font-size: 9px;
    line-height: 0;
}

.frac {
    display: inline-flex;
    flex-direction: column;
    align-items: center;
    vertical-align: middle;
    font-size: 13.5px;
    line-height: 12px;
}

.frac span:first-child {
    border-bottom: 1px solid #1d2125;
    align-self: stretch;
    text-align: center;
}

.frac.small {
    font-size: 14.5px;
    font-weight: 700;
    line-height: 14px;
    padding: 0 1px;
}

.frac.tall {
    font-size: 14px;
    line-height: 14px;
}

.frac.tiny {
    font-size: 11px;
    line-height: 9px;
}

sup {
    font-size: 14px;
    line-height: 0;
    vertical-align: 10px;
}

sub {
    font-size: 14px;
    line-height: 0;
}

.ex {
    vertical-align: 11px;
    margin: 0 3px 0 2px;
}

.ex-high {
    vertical-align: 15px;
}

.paren {
    font-size: 40px;
    font-weight: 400;
    line-height: 0;
    vertical-align: -6px;
}

.paren.mid {
    font-size: 28px;
    vertical-align: -3px;
}

.cases {
    display: inline-flex;
    flex-direction: column;
    vertical-align: middle;
    align-items: center;
    border-left: 1px solid #1d2125;
    border-right: 1px solid #1d2125;
    padding: 0 3px;
    height: 46px;
    justify-content: space-around;
}

.big-row {
    line-height: 48px;
}

.cases-row {
    line-height: 22px;
    white-space: nowrap;
    word-spacing: 3px;
}

.qed {
    display: inline-block;
    width: 11px;
    height: 11px;
    background: #1d2125;
    vertical-align: -1px;
}

/* ---- taskbar ---- */
.taskbar {
    height: 40px;
    flex: none;
    display: flex;
    align-items: center;
    background: linear-gradient(90deg, #1c1c20 0%, #1c1c20 35%, #3a1f2e 50%, #2a1c25 62%, #1c1c20 75%);
    color: #e8e8e8;
}

.tb-left {
    width: 1181px;
    height: 40px;
    padding-left: 16px;
    display: flex;
    align-items: center;
    gap: 29px;
    flex: none;
}

.tb-links {
    font-size: 12px;
    color: #c8c8c8;
    margin-left: -9px;
}

.tb-apps {
    display: flex;
    height: 40px;
    gap: 5px;
}

.app {
    width: 42px;
    height: 40px;
    display: flex;
    align-items: center;
    justify-content: center;
    border-bottom: 2px solid #a8d8f0;
    position: relative;
}

.app-narrow {
    width: 40px;
}

.app-folder {
    margin-left: 2px;
}

.app-current {
    width: 48px;
    background: #5c4650;
}

.badge {
    position: absolute;
    left: 22px;
    top: 19px;
    height: 15px;
    padding: 0 2px;
    font-size: 10px;
    line-height: 15px;
    color: #fff;
    background: #e5484d;
}

.badge-round {
    border-radius: 8px;
}

.badge-tg {
    border-radius: 3px;
    left: 20px;
}

.tray {
    margin-left: auto;
    height: 40px;
    padding-right: 4px;
    display: flex;
    align-items: center;
}

.tray-caret {
    margin-left: 26px;
}

.tray-net {
    margin-left: 10px;
}

.tray-vol {
    margin-left: 8px;
}

.lang {
    font-size: 12px;
    margin-left: 9px;
    width: 26px;
}

.clock {
    width: 64px;
    margin-left: 5px;
    display: flex;
    flex-direction: column;
    align-items: center;
    font-size: 12px;
    line-height: 17px;
}

.notify {
    margin-left: 14px;
}

.show-desktop {
    width: 1px;
    height: 40px;
    margin-left: 20px;
    background: #4a4a4e;
}
```
